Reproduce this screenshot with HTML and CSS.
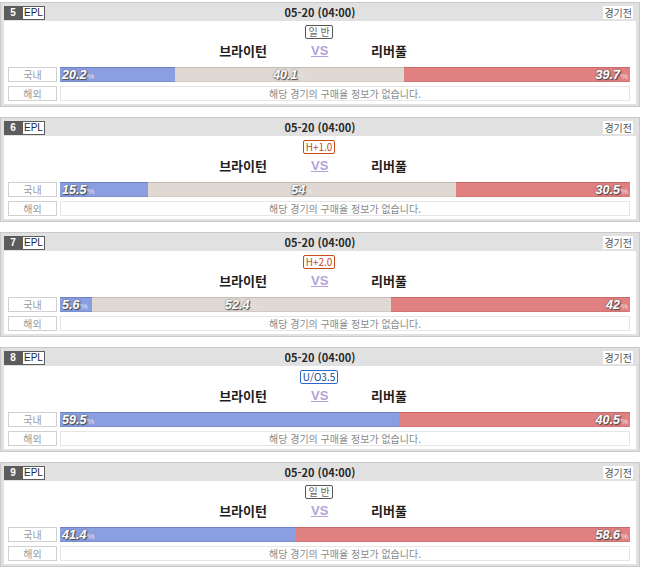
FILE: index.html
```html
<!DOCTYPE html>
<html lang="ko">
<head>
<meta charset="utf-8">
<link rel="stylesheet" href="styles.css">
</head>
<body>
<div class="list">

  <div class="card">
    <div class="head">
      <div class="tags"><span class="num">5</span><span class="league">EPL</span></div>
      <div class="time">05-20 (04:00)</div>
      <div class="status">경기전</div>
    </div>
    <div class="body">
      <div class="badge-row"><span class="badge gray">일 반</span></div>
      <div class="teams"><span class="team home">브라이턴</span><span class="vs">VS</span><span class="team away">리버풀</span></div>
      <div class="row">
        <span class="label">국내</span>
        <div class="bar">
          <div class="seg blue" style="width:20.2%"><b>20.2</b><i>%</i></div>
          <div class="seg beige" style="width:40.1%"><b>40.1</b><i>%</i></div>
          <div class="seg red" style="width:39.7%"><b>39.7</b><i>%</i></div>
        </div>
      </div>
      <div class="row">
        <span class="label">해외</span>
        <div class="info">해당 경기의 구매율 정보가 없습니다.</div>
      </div>
    </div>
  </div>

  <div class="card">
    <div class="head">
      <div class="tags"><span class="num">6</span><span class="league">EPL</span></div>
      <div class="time">05-20 (04:00)</div>
      <div class="status">경기전</div>
    </div>
    <div class="body">
      <div class="badge-row"><span class="badge orange">H+1.0</span></div>
      <div class="teams"><span class="team home">브라이턴</span><span class="vs">VS</span><span class="team away">리버풀</span></div>
      <div class="row">
        <span class="label">국내</span>
        <div class="bar">
          <div class="seg blue" style="width:15.5%"><b>15.5</b><i>%</i></div>
          <div class="seg beige" style="width:54%"><b>54</b><i>%</i></div>
          <div class="seg red" style="width:30.5%"><b>30.5</b><i>%</i></div>
        </div>
      </div>
      <div class="row">
        <span class="label">해외</span>
        <div class="info">해당 경기의 구매율 정보가 없습니다.</div>
      </div>
    </div>
  </div>

  <div class="card">
    <div class="head">
      <div class="tags"><span class="num">7</span><span class="league">EPL</span></div>
      <div class="time">05-20 (04:00)</div>
      <div class="status">경기전</div>
    </div>
    <div class="body">
      <div class="badge-row"><span class="badge orange">H+2.0</span></div>
      <div class="teams"><span class="team home">브라이턴</span><span class="vs">VS</span><span class="team away">리버풀</span></div>
      <div class="row">
        <span class="label">국내</span>
        <div class="bar">
          <div class="seg blue" style="width:5.6%"><b>5.6</b><i>%</i></div>
          <div class="seg beige" style="width:52.4%"><b>52.4</b><i>%</i></div>
          <div class="seg red" style="width:42%"><b>42</b><i>%</i></div>
        </div>
      </div>
      <div class="row">
        <span class="label">해외</span>
        <div class="info">해당 경기의 구매율 정보가 없습니다.</div>
      </div>
    </div>
  </div>

  <div class="card">
    <div class="head">
      <div class="tags"><span class="num">8</span><span class="league">EPL</span></div>
      <div class="time">05-20 (04:00)</div>
      <div class="status">경기전</div>
    </div>
    <div class="body">
      <div class="badge-row"><span class="badge blueb">U/O3.5</span></div>
      <div class="teams"><span class="team home">브라이턴</span><span class="vs">VS</span><span class="team away">리버풀</span></div>
      <div class="row">
        <span class="label">국내</span>
        <div class="bar">
          <div class="seg blue" style="width:59.5%"><b>59.5</b><i>%</i></div>
          <div class="seg red" style="width:40.5%"><b>40.5</b><i>%</i></div>
        </div>
      </div>
      <div class="row">
        <span class="label">해외</span>
        <div class="info">해당 경기의 구매율 정보가 없습니다.</div>
      </div>
    </div>
  </div>

  <div class="card">
    <div class="head">
      <div class="tags"><span class="num">9</span><span class="league">EPL</span></div>
      <div class="time">05-20 (04:00)</div>
      <div class="status">경기전</div>
    </div>
    <div class="body">
      <div class="badge-row"><span class="badge gray">일 반</span></div>
      <div class="teams"><span class="team home">브라이턴</span><span class="vs">VS</span><span class="team away">리버풀</span></div>
      <div class="row">
        <span class="label">국내</span>
        <div class="bar">
          <div class="seg blue" style="width:41.4%"><b>41.4</b><i>%</i></div>
          <div class="seg red" style="width:58.6%"><b>58.6</b><i>%</i></div>
        </div>
      </div>
      <div class="row">
        <span class="label">해외</span>
        <div class="info">해당 경기의 구매율 정보가 없습니다.</div>
      </div>
    </div>
  </div>

</div>
</body>
</html>
```

FILE: styles.css
```css
* { box-sizing: border-box; }
html, body { margin: 0; padding: 0; background: #fff; }
body {
  font-family: "Noto Sans CJK KR", "Noto Sans", sans-serif;
  font-size: 11px;
  color: #333;
}
.list {
  padding-top: 2px;
  width: 640px;
  display: flex;
  flex-direction: column;
  gap: 10px;
}
.card {
  background: #e1e1e1;
  border: 1px solid #c9c9c9;
  padding: 0 3px 2px 3px;
  height: 105px;
  display: flex;
  flex-direction: column;
}
.head {
  height: 19px;
  position: relative;
  display: flex;
  align-items: center;
  justify-content: space-between;
}
.tags { display: flex; height: 14px; margin-top: 1px; }
.num {
  width: 18px;
  background: #5c5c5c;
  color: #fff;
  font-weight: bold;
  font-size: 10px;
  line-height: 14px;
  text-align: center;
  font-family: "Liberation Sans", sans-serif;
}
.league {
  border: 1px solid #5c5c5c;
  background: #fff;
  color: #1b2a4e;
  font-size: 10px;
  line-height: 12px;
  padding: 0 1px;
  text-align: center;
  font-family: "Liberation Sans", sans-serif;
}
.time {
  position: absolute;
  left: 0;
  right: 0;
  text-align: center;
  font-size: 11px;
  font-weight: bold;
  line-height: 19px;
  color: #2a2a2a;
  pointer-events: none;
}
.status {
  background: #fff;
  color: #555;
  font-size: 10px;
  line-height: 13px;
  padding: 0 1px;
  margin-right: 3px;
  margin-top: 1px;
}
.body {
  background: #fff;
  flex: 1;
  padding: 3px 6px 3px 4px;
  display: flex;
  flex-direction: column;
}
.badge-row { display: flex; justify-content: center; height: 14px; margin-top: 1px; }
.badge {
  border: 1px solid #666;
  border-radius: 2px;
  font-size: 10px;
  line-height: 12px;
  padding: 0 2px;
  background: #fff;
}
.badge.gray { color: #666; border-color: #555; }
.badge.orange { color: #c84a1a; border-color: #c84a1a; }
.badge.blueb { color: #1a4690; border-color: #2a6ac8; }
.teams {
  display: flex;
  height: 18px;
  margin-top: 3px;
  align-items: center;
}
.team {
  flex: 1;
  font-weight: bold;
  font-size: 13px;
  line-height: 18px;
  color: #1e1e1e;
}
.team.home { text-align: right; padding-right: 44px; }
.team.away { text-align: left; padding-left: 44px; }
.vs {
  width: 16px;
  text-align: center;
  font-family: "Liberation Sans", sans-serif;
  font-weight: bold;
  font-size: 13px;
  color: #b3a2d8;
  text-decoration: underline;
  line-height: 18px;
}
.row {
  display: flex;
  gap: 3px;
  height: 15px;
  margin-top: 7px;
}
.row + .row { margin-top: 4px; }
.label {
  width: 49px;
  border: 1px solid #d0d0d0;
  color: #9a9a9a;
  font-size: 10px;
  line-height: 13px;
  text-align: center;
  background: #fff;
}
.bar {
  flex: 1;
  display: flex;
}
.seg {
  height: 15px;
  line-height: 14px;
  white-space: nowrap;
  overflow: hidden;
  font-family: "Liberation Sans", sans-serif;
}
.seg b {
  font-weight: bold;
  font-style: italic;
  font-size: 12.5px;
  color: #fff;
  text-shadow: 0 0 2px #555, 1px 1px 1px #444;
}
.seg i {
  font-style: normal;
  font-size: 8px;
  color: #e4e4e4;
  margin-left: 1px;
}
.seg.blue {
  background: #8a9ee0;
  border-top: 1px solid #6d80c6;
  border-bottom: 1px solid #7a8ed2;
  text-align: left;
  padding-left: 2px;
}
.seg.beige {
  background: #e0d9d3;
  border-top: 1px solid #c5bcb5;
  border-bottom: 1px solid #d2cac3;
  text-align: center;
}
.seg.red {
  background: #e08080;
  border-top: 1px solid #c86868;
  border-bottom: 1px solid #d27474;
  text-align: right;
  padding-right: 2px;
}
.info {
  flex: 1;
  border: 1px solid #e6e6e6;
  color: #8a8a8a;
  font-size: 10px;
  line-height: 13px;
  text-align: center;
}
```
